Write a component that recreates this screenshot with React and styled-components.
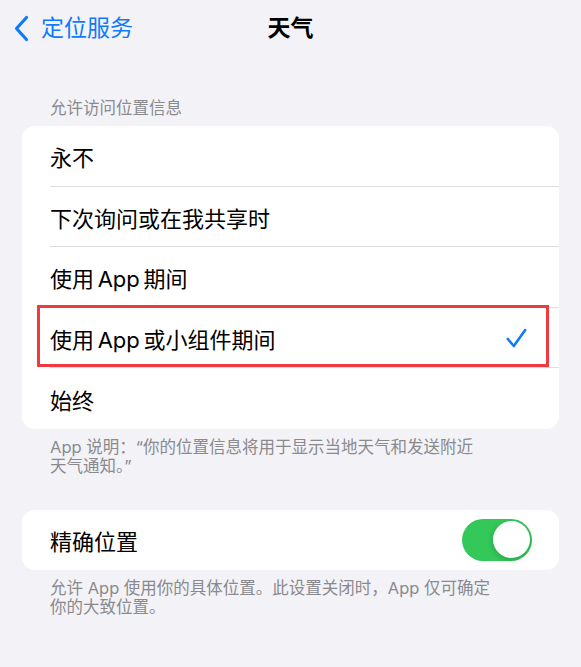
import React, { useState } from "react";
import styled, { createGlobalStyle } from "styled-components";

const GlobalStyle = createGlobalStyle`
  html, body {
    margin: 0;
    padding: 0;
    background: #f2f2f7;
  }
  body {
    font-family: Inter, "Noto Sans CJK SC", sans-serif;
    -webkit-font-smoothing: antialiased;
  }
`;

const Page = styled.div`
  width: 581px;
  min-height: 667px;
  background: #f2f2f7;
  display: flex;
  flex-direction: column;
`;

const NavBar = styled.div`
  height: 56px;
  display: grid;
  grid-template-columns: 1fr auto 1fr;
  align-items: center;
`;

const BackButton = styled.div`
  display: flex;
  align-items: center;
  gap: 12px;
  padding-left: 14px;
  color: #0f7bfa;
  font-size: 23px;
  line-height: 1;
`;

const Title = styled.div`
  font-size: 23px;
  font-weight: 600;
  color: #000;
  line-height: 1;
`;

const Content = styled.div`
  padding: 0 22px;
  display: flex;
  flex-direction: column;
`;

const SectionHeader = styled.div`
  margin-top: 42px;
  padding-left: 28px;
  font-size: 16.5px;
  line-height: 20px;
  color: #8a8a8e;
`;

const Card = styled.div`
  margin-top: ${(p) => p.$top}px;
  background: #fff;
  border-radius: 13px;
`;

const Row = styled.div`
  position: relative;
  height: ${(p) => p.$h || 60.6}px;
  display: flex;
  align-items: center;
  justify-content: space-between;
  padding: 0 27px 0 28px;
  font-size: 22px;
  word-spacing: -2.5px;
  color: #000;

  &:not(:last-child)::after {
    content: "";
    position: absolute;
    left: 28px;
    right: 0;
    bottom: 0;
    height: 1px;
    background: #dedee2;
  }
`;

const CheckMark = styled.svg`
  margin-right: 5px;
`;

const Highlight = styled.div`
  position: absolute;
  left: 15px;
  right: 10px;
  top: -3px;
  bottom: 1px;
  border: 3.5px solid #ef3a3f;
  pointer-events: none;
  z-index: 1;
`;

const Footer = styled.div`
  margin-top: ${(p) => p.$top}px;
  padding-left: 28px;
  font-size: 16.5px;
  line-height: 19.5px;
  color: #8a8a8e;
`;

const Switch = styled.button`
  position: relative;
  width: 70px;
  height: 42px;
  border: none;
  padding: 0;
  border-radius: 21px;
  background: ${(p) => (p.$on ? "#34c759" : "#e9e9eb")};
  cursor: pointer;
`;

const Knob = styled.span`
  position: absolute;
  top: 2.5px;
  left: ${(p) => (p.$on ? "30.5px" : "2.5px")};
  width: 37px;
  height: 37px;
  border-radius: 50%;
  background: #fff;
  box-shadow: 0 2px 6px rgba(0, 0, 0, 0.18);
`;

const Chevron = () => (
  <svg width="15" height="27" viewBox="0 0 15 27">
    <path
      d="M12.5 2.5 L2.5 13.5 L12.5 24.5"
      fill="none"
      stroke="#0f7bfa"
      strokeWidth="3.2"
      strokeLinecap="round"
      strokeLinejoin="round"
    />
  </svg>
);

const Check = () => (
  <CheckMark width="21" height="20" viewBox="0 0 21 20">
    <path
      d="M1.8 11 L7.8 18 L19.2 2"
      fill="none"
      stroke="#0f7bfa"
      strokeWidth="2.6"
      strokeLinecap="round"
      strokeLinejoin="round"
    />
  </CheckMark>
);

const options = [
  "永不",
  "下次询问或在我共享时",
  "使用 App 期间",
  "使用 App 或小组件期间",
  "始终",
];

export default function App() {
  const [selected] = useState(3);
  const [precise, setPrecise] = useState(true);

  return (
    <Page>
      <GlobalStyle />
      <NavBar>
        <BackButton>
          <Chevron />
          定位服务
        </BackButton>
        <Title>天气</Title>
        <div />
      </NavBar>
      <Content>
        <SectionHeader>允许访问位置信息</SectionHeader>
        <Card $top={8}>
          {options.map((label, i) => (
            <Row key={label}>
              {label}
              {i === selected && <Check />}
              {i === selected && <Highlight />}
            </Row>
          ))}
        </Card>
        <Footer $top={9}>
          App 说明：“你的位置信息将用于显示当地天气和发送附近
          <br />
          天气通知。”
        </Footer>
        <Card $top={33}>
          <Row $h={60}>
            精确位置
            <Switch $on={precise} onClick={() => setPrecise(!precise)}>
              <Knob $on={precise} />
            </Switch>
          </Row>
        </Card>
        <Footer $top={9}>
          允许 App 使用你的具体位置。此设置关闭时，App 仅可确定
          <br />
          你的大致位置。
        </Footer>
      </Content>
    </Page>
  );
}
